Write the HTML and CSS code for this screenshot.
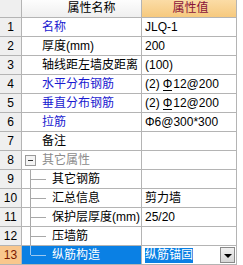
FILE: index.html
```html
<!DOCTYPE html>
<html lang="zh-CN">
<head>
    <meta charset="UTF-8">
    <title>属性编辑</title>
    <link rel="stylesheet" href="styles.css">
</head>
<body>
    <div class="grid">
        <div class="head num"></div>
        <div class="head name">属性名称</div>
        <div class="head value">属性值</div>

        <div class="num">1</div>
        <div class="name key">名称</div>
        <div class="value">JLQ-1</div>

        <div class="num">2</div>
        <div class="name">厚度(mm)</div>
        <div class="value">200</div>

        <div class="num">3</div>
        <div class="name">轴线距左墙皮距离</div>
        <div class="value">(100)</div>

        <div class="num">4</div>
        <div class="name key">水平分布钢筋</div>
        <div class="value">(2)<span class="bar">Φ</span>12@200</div>

        <div class="num">5</div>
        <div class="name key">垂直分布钢筋</div>
        <div class="value">(2)<span class="bar">Φ</span>12@200</div>

        <div class="num">6</div>
        <div class="name key">拉筋</div>
        <div class="value">Φ6@300*300</div>

        <div class="num">7</div>
        <div class="name">备注</div>
        <div class="value"></div>

        <div class="num">8</div>
        <div class="name group"><span class="toggle"></span>其它属性</div>
        <div class="value"></div>

        <div class="num">9</div>
        <div class="name child">其它钢筋</div>
        <div class="value"></div>

        <div class="num">10</div>
        <div class="name child">汇总信息</div>
        <div class="value">剪力墙</div>

        <div class="num">11</div>
        <div class="name child">保护层厚度(mm)</div>
        <div class="value">25/20</div>

        <div class="num">12</div>
        <div class="name child">压墙筋</div>
        <div class="value"></div>

        <div class="num current">13</div>
        <div class="name child last selected">纵筋构造</div>
        <div class="value editor">
            <span class="picked">纵筋锚固</span>
            <span class="drop"></span>
        </div>
    </div>
</body>
</html>
```

FILE: styles.css
```css
body {
    margin: 0;
    background: #ffffff;
    font-family: "Liberation Sans", "Noto Sans CJK SC", sans-serif;
    font-size: 12px;
}

.grid {
    display: grid;
    grid-template-columns: 21px 119px 94px;
    grid-template-rows: 17px;
    grid-auto-rows: 18px;
    gap: 1px;
    width: 236px;
    background: #b4b4b4;
    border-right: 1px solid #b4b4b4;
    border-bottom: 1px solid #b4b4b4;
}

.grid > div {
    background: #ffffff;
    line-height: 18px;
    white-space: nowrap;
    overflow: hidden;
    color: #000000;
}

.head {
    line-height: 17px !important;
    text-align: center;
    background: linear-gradient(#fdfdfd, #efefef) !important;
}

.head.value {
    background: linear-gradient(#fbdca6, #f6c97e) !important;
    color: #8a1238 !important;
}

.num {
    text-align: center;
    background: #efefef !important;
}

.num.current {
    background: #f9c78d !important;
    color: #7a1a00 !important;
}

.name {
    padding-left: 20px;
    position: relative;
}

.key {
    color: #1a1ad0 !important;
}

.group {
    color: #8c8c8c !important;
    display: flex;
    align-items: center;
}

.toggle {
    position: absolute;
    left: 3px;
    top: 4px;
    width: 9px;
    height: 9px;
    border: 1px solid #9a9a9a;
    background: #f4f4f4;
}

.toggle::after {
    content: "";
    position: absolute;
    left: 2px;
    top: 4px;
    width: 5px;
    height: 1px;
    background: #333333;
}

.child {
    padding-left: 30px;
}

.child::before {
    content: "";
    position: absolute;
    left: 8px;
    top: -1px;
    height: 20px;
    border-left: 1px solid #a8a8a8;
}

.child::after {
    content: "";
    position: absolute;
    left: 9px;
    top: 9px;
    width: 15px;
    border-top: 1px solid #a8a8a8;
}

.child.last::before {
    height: 10px;
}

.selected {
    background: #0a80e4 !important;
    color: #ffffff !important;
}

.selected::before,
.selected::after {
    border-color: #9cc8f0;
}

.value {
    padding-left: 3px;
}

.bar {
    display: inline-block;
    margin: 0 1px 0 3px;
    line-height: 11px;
    border-bottom: 1px solid #000000;
}

.editor {
    display: flex;
    align-items: center;
    justify-content: space-between;
    padding-right: 1px;
}

.picked {
    background: #0a80e4;
    color: #ffffff;
    line-height: 15px;
}

.drop {
    position: relative;
    width: 13px;
    height: 14px;
    border: 1px solid #8a8a8a;
    background: linear-gradient(#f0f0f0, #d6d6d6);
}

.drop::after {
    content: "";
    position: absolute;
    left: 3px;
    top: 6px;
    border-left: 4px solid transparent;
    border-right: 4px solid transparent;
    border-top: 4px solid #000000;
}
```
